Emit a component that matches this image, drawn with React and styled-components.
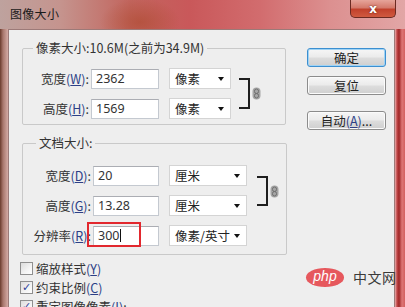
import React from "react";
import styled, { createGlobalStyle } from "styled-components";

const GlobalStyle = createGlobalStyle`
  html, body {
    margin: 0;
    padding: 0;
    background: #ffffff;
  }
  body {
    font-family: "Noto Sans CJK SC", "Noto Sans", sans-serif;
    font-size: 12px;
    color: #222;
  }
`;

const Window = styled.div`
  width: 405px;
  height: 307px;
  overflow: hidden;
  display: flex;
  flex-direction: column;
  background: linear-gradient(
    to right,
    #6a3a2c 0px,
    #a8766c 3px,
    #d4aaa4 8px,
    #d89a9a 200px,
    #e9acac 395px,
    #c24848 397px,
    #9e2626 399px,
    #dd7676 402px,
    #d36060 405px
  );
`;

const TitleBar = styled.div`
  height: 29px;
  flex: 0 0 29px;
  display: flex;
  align-items: flex-start;
  justify-content: space-between;
  padding-left: 10px;
  box-sizing: border-box;
  background:
    radial-gradient(ellipse 40px 24px at 140px 22px, rgba(170, 70, 40, 0.55), transparent),
    linear-gradient(
      to right,
      #bea29e 0px,
      #c5948e 60px,
      #c2655e 130px,
      #c9585a 190px,
      #d26c6e 260px,
      #dc9090 330px,
      #e2a6a6 405px
    );
`;

const Title = styled.span`
  margin-top: 5px;
  font-size: 12px;
  color: #1a1a1a;
  letter-spacing: 0.3px;
`;

const CloseButton = styled.div`
  width: 46px;
  height: 18px;
  margin-right: 9px;
  box-sizing: border-box;
  border: 1px solid #6b2a22;
  border-top: none;
  border-radius: 0 0 5px 5px;
  background: linear-gradient(to bottom, #e6a49a 0%, #d47a6c 45%, #c1412c 55%, #d05a40 100%);
  display: flex;
  align-items: center;
  justify-content: center;
  color: #fff;
  font-family: "DejaVu Sans", sans-serif;
  font-weight: bold;
  font-size: 12px;
  text-shadow: 0 0 2px #5a1a10;
`;

const Content = styled.div`
  position: relative;
  flex: 1;
  margin: 0 10px 0 8px;
  background: #eeeeee;
  border: 1px solid #9c7a78;
  border-bottom: none;
  display: flex;
  padding: 18px 10px 0 13px;
  gap: 20px;
`;

const LeftColumn = styled.div`
  display: flex;
  flex-direction: column;
`;

const Group = styled.div`
  position: relative;
  width: ${(p) => p.$width}px;
  box-sizing: border-box;
  border: 1px solid #c9c9c9;
  border-radius: 2px;
  padding: ${(p) => p.$padTop}px 0 ${(p) => p.$padBottom}px 0;
  margin-bottom: ${(p) => p.$marginBottom || 0}px;
  display: flex;
  align-items: flex-start;
`;

const Legend = styled.span`
  position: absolute;
  top: -9px;
  left: ${(p) => p.$left}px;
  padding: 0 3px;
  background: #eeeeee;
  font-size: 12.5px;
  color: #333;
  line-height: 16px;
`;

const Fields = styled.div`
  display: grid;
  grid-template-columns: ${(p) => p.$cols};
  grid-auto-rows: 21px;
  row-gap: 9px;
  column-gap: 0;
  align-items: center;
`;

const Label = styled.label`
  text-align: right;
  padding-right: 2px;
  font-size: 12.5px;
  color: #333;
  white-space: nowrap;
`;

const Mnemonic = styled.span`
  color: #2c3f86;
  u {
    text-decoration: underline;
    text-underline-offset: 1px;
  }
`;

const Input = styled.div`
  position: relative;
  height: 20px;
  box-sizing: border-box;
  border: 1px solid #c4c9d0;
  border-top-color: #abadb3;
  background: #ffffff;
  margin-right: 10px;
  padding-left: 4px;
  display: flex;
  align-items: center;
  font-family: "Noto Sans", sans-serif;
  font-size: 12.5px;
  color: #333;
`;

const Caret = styled.span`
  display: inline-block;
  width: 1px;
  height: 13px;
  background: #111;
  margin-left: 1px;
`;

const Select = styled.div`
  height: 21px;
  box-sizing: border-box;
  border: 1px solid #d4d4d4;
  background: #ffffff;
  display: flex;
  align-items: center;
  justify-content: space-between;
  padding: 0 6px 0 5px;
  font-size: 12.5px;
  color: #222;
`;

const Arrow = styled.span`
  width: 0;
  height: 0;
  border-left: 3px solid transparent;
  border-right: 3px solid transparent;
  border-top: 4px solid #111;
`;

const Link = styled.div`
  display: flex;
  align-items: center;
  margin-left: ${(p) => p.$gap}px;
  margin-top: ${(p) => p.$top}px;
`;

const Bracket = styled.div`
  width: 11px;
  height: ${(p) => p.$height}px;
  box-sizing: border-box;
  border: 2px solid #1e1e1e;
  border-left: none;
`;

const Chain = styled.svg`
  margin-left: 2px;
`;

const ButtonColumn = styled.div`
  display: flex;
  flex-direction: column;
  padding-top: 0;
`;

const Button = styled.div`
  width: 79px;
  height: 19px;
  box-sizing: border-box;
  border: 1px solid ${(p) => (p.$primary ? "#3c8fd0" : "#8c8c8c")};
  border-radius: 3px;
  box-shadow: ${(p) => (p.$primary ? "0 0 0 1px #9fd3f5 inset" : "0 0 0 1px #fbfbfb inset")};
  background: linear-gradient(to bottom, #f6f6f6 0%, #ebebeb 48%, #dddddd 52%, #cfcfcf 100%);
  display: flex;
  align-items: center;
  justify-content: center;
  font-size: 12.5px;
  color: #222;
  margin-bottom: ${(p) => p.$gap || 0}px;
`;

const CheckRow = styled.div`
  display: flex;
  align-items: center;
  height: 13px;
  margin-left: -2px;
  margin-bottom: 6px;
  font-size: 12.5px;
  color: #333;
  white-space: nowrap;
`;

const CheckBox = styled.span`
  width: 13px;
  height: 13px;
  box-sizing: border-box;
  border: 1px solid #8f8f8f;
  background: linear-gradient(135deg, #dcdcdc 0%, #f4f4f4 60%, #ffffff 100%);
  margin-right: 3px;
  display: flex;
  align-items: center;
  justify-content: center;
  color: #2f3f9a;
  font-family: "DejaVu Sans", sans-serif;
  font-size: 11px;
  line-height: 1;
`;

const Highlight = styled.div`
  position: absolute;
  left: 78px;
  top: 192px;
  width: 54px;
  height: 25px;
  box-sizing: border-box;
  border: 2px solid #e2282e;
`;

const Watermark = styled.div`
  position: absolute;
  left: 297px;
  top: 237px;
  display: flex;
  align-items: center;
  gap: 9px;
  white-space: nowrap;
`;

const PhpBadge = styled.div`
  width: 38px;
  height: 19px;
  border-radius: 50%;
  background: #e6585d;
  color: #fff;
  font-family: "Liberation Sans", sans-serif;
  font-style: italic;
  font-size: 14px;
  display: flex;
  align-items: center;
  justify-content: center;
  padding-bottom: 2px;
  box-sizing: border-box;
`;

const PhpText = styled.span`
  font-size: 14px;
  color: #3a3a3a;
  letter-spacing: 0.5px;
`;

const ChainIcon = () => (
  <Chain width="9" height="13" viewBox="0 0 9 13">
    <rect x="0.5" y="0.5" width="8" height="12" rx="4" fill="#a5a5a5" />
    <rect x="2.5" y="2" width="4" height="4.5" rx="2" fill="none" stroke="#6f6f6f" />
    <rect x="2.5" y="6.5" width="4" height="4.5" rx="2" fill="none" stroke="#6f6f6f" />
  </Chain>
);

const FieldLabel = ({ text, mn }) => (
  <Label>
    {text}
    <Mnemonic>
      (<u>{mn}</u>)
    </Mnemonic>
    :
  </Label>
);

const App = () => (
  <>
    <GlobalStyle />
    <Window>
      <TitleBar>
        <Title>图像大小</Title>
        <CloseButton>x</CloseButton>
      </TitleBar>
      <Content>
        <LeftColumn>
          <Group $width={264} $padTop={19} $padBottom={5} $marginBottom={18}>
            <Legend $left={10}>像素大小:10.6M(之前为34.9M)</Legend>
            <Fields $cols="68px 78px 62px">
              <FieldLabel text="宽度" mn="W" />
              <Input>2362</Input>
              <Select>
                像素
                <Arrow />
              </Select>
              <FieldLabel text="高度" mn="H" />
              <Input>1569</Input>
              <Select>
                像素
                <Arrow />
              </Select>
            </Fields>
            <Link $gap={8} $top={10}>
              <Bracket $height={31} />
              <ChainIcon />
            </Link>
          </Group>

          <Group $width={265} $padTop={21} $padBottom={8} $marginBottom={7}>
            <Legend $left={13}>文档大小:</Legend>
            <Fields $cols="70px 76px 78px">
              <FieldLabel text="宽度" mn="D" />
              <Input>20</Input>
              <Select>
                厘米
                <Arrow />
              </Select>
              <FieldLabel text="高度" mn="G" />
              <Input>13.28</Input>
              <Select>
                厘米
                <Arrow />
              </Select>
              <FieldLabel text="分辨率" mn="R" />
              <Input>
                300
                <Caret />
              </Input>
              <Select>
                像素/英寸
                <Arrow />
              </Select>
            </Fields>
            <Link $gap={10} $top={11}>
              <Bracket $height={30} />
              <ChainIcon />
            </Link>
          </Group>

          <CheckRow>
            <CheckBox />
            缩放样式
            <Mnemonic>
              (<u>Y</u>)
            </Mnemonic>
          </CheckRow>
          <CheckRow>
            <CheckBox>✓</CheckBox>
            约束比例
            <Mnemonic>
              (<u>C</u>)
            </Mnemonic>
          </CheckRow>
          <CheckRow>
            <CheckBox>✓</CheckBox>
            重定图像像素
            <Mnemonic>
              (<u>I</u>)
            </Mnemonic>
            :
          </CheckRow>
        </LeftColumn>

        <ButtonColumn>
          <Button $primary $gap={9}>确定</Button>
          <Button $gap={16}>复位</Button>
          <Button>
            自动
            <Mnemonic>
              (<u>A</u>)
            </Mnemonic>
            ...
          </Button>
        </ButtonColumn>

        <Highlight />
        <Watermark>
          <PhpBadge>php</PhpBadge>
          <PhpText>中文网</PhpText>
        </Watermark>
      </Content>
    </Window>
  </>
);

export default App;
